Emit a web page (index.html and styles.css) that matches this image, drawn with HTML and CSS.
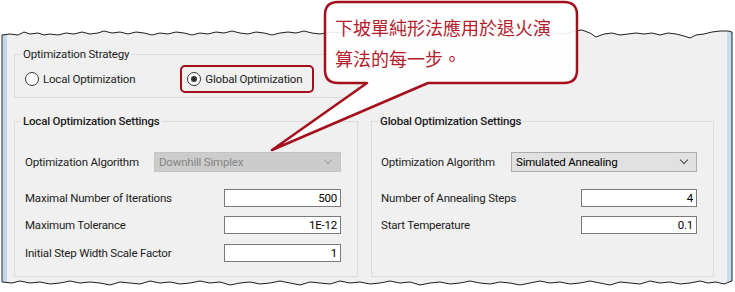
FILE: index.html
```html
<!DOCTYPE html>
<html lang="en">
<head>
  <meta charset="UTF-8" />
  <title>Optimization Settings</title>
  <link rel="stylesheet" href="styles.css">
</head>
<body>
  <div class="page">
    <!-- torn screenshot frame -->
    <svg class="frame" width="735" height="292" viewBox="0 0 735 292">
      <path class="paper" d="M2 35 L10 34 L18 35 L24 32 L30 34 L38 33 L44 35 L50 34 L58 35 L66 33 L74 34 L82 32 L90 34 L98 33 L104 31 L112 33 L120 32 L128 34 L136 32 L144 33 L152 35 L160 33 L168 34 L176 32 L184 33 L192 35 L200 33 L208 34 L216 32 L224 33 L232 31 L240 33 L248 34 L256 32 L264 33 L272 35 L280 33 L288 32 L296 33 L304 31 L312 33 L320 34 L330 32 L340 33 L350 31 L360 33 L372 34 L384 32 L396 33 L408 31 L420 34 L432 33 L444 32 L456 34 L468 33 L480 31 L492 33 L504 34 L516 32 L528 33 L540 31 L552 33 L564 34 L574 31 L582 30 L590 33 L596 37 L604 34 L612 33 L620 35 L628 34 L636 33 L644 34 L652 33 L660 35 L668 33 L676 34 L684 36 L690 38 L696 35 L704 34 L712 32 L720 31 L728 31 L732 32 L732 281 L724 284 L716 282 L708 283 L700 281 L690 283 L680 284 L670 282 L660 283 L650 281 L640 284 L630 283 L620 282 L610 285 L600 283 L590 281 L580 283 L570 284 L560 282 L550 283 L540 281 L530 283 L520 285 L510 283 L500 282 L490 284 L480 283 L470 281 L460 283 L450 284 L440 282 L430 283 L420 285 L410 282 L400 283 L390 281 L380 283 L370 284 L360 282 L350 283 L340 281 L330 284 L320 283 L310 282 L300 285 L290 283 L280 281 L270 283 L260 284 L250 282 L240 283 L230 285 L220 282 L210 283 L200 281 L190 283 L180 284 L170 282 L160 283 L150 281 L140 284 L130 283 L120 282 L110 285 L100 283 L90 282 L80 283 L70 281 L60 283 L50 284 L40 282 L30 283 L20 281 L12 283 L2 282 Z"/>
      <rect class="edge" x="3" y="35" width="4" height="247"/>
      <rect class="edge edge-right" x="727" y="32" width="5" height="250"/>
      <path class="tear" d="M2 35 L10 34 L18 35 L24 32 L30 34 L38 33 L44 35 L50 34 L58 35 L66 33 L74 34 L82 32 L90 34 L98 33 L104 31 L112 33 L120 32 L128 34 L136 32 L144 33 L152 35 L160 33 L168 34 L176 32 L184 33 L192 35 L200 33 L208 34 L216 32 L224 33 L232 31 L240 33 L248 34 L256 32 L264 33 L272 35 L280 33 L288 32 L296 33 L304 31 L312 33 L320 34 L330 32 L340 33 L350 31 L360 33 L372 34 L384 32 L396 33 L408 31 L420 34 L432 33 L444 32 L456 34 L468 33 L480 31 L492 33 L504 34 L516 32 L528 33 L540 31 L552 33 L564 34 L574 31 L582 30 L590 33 L596 37 L604 34 L612 33 L620 35 L628 34 L636 33 L644 34 L652 33 L660 35 L668 33 L676 34 L684 36 L690 38 L696 35 L704 34 L712 32 L720 31 L728 31 L732 32 L732 281 L724 284 L716 282 L708 283 L700 281 L690 283 L680 284 L670 282 L660 283 L650 281 L640 284 L630 283 L620 282 L610 285 L600 283 L590 281 L580 283 L570 284 L560 282 L550 283 L540 281 L530 283 L520 285 L510 283 L500 282 L490 284 L480 283 L470 281 L460 283 L450 284 L440 282 L430 283 L420 285 L410 282 L400 283 L390 281 L380 283 L370 284 L360 282 L350 283 L340 281 L330 284 L320 283 L310 282 L300 285 L290 283 L280 281 L270 283 L260 284 L250 282 L240 283 L230 285 L220 282 L210 283 L200 281 L190 283 L180 284 L170 282 L160 283 L150 281 L140 284 L130 283 L120 282 L110 285 L100 283 L90 282 L80 283 L70 281 L60 283 L50 284 L40 282 L30 283 L20 281 L12 283 L2 282 Z"/>
    </svg>

    <div class="window">
      <fieldset class="group strategy">
        <legend>Optimization Strategy</legend>
        <div class="radios">
          <label class="radio"><span class="dot"></span>Local Optimization</label>
          <label class="radio picked"><span class="dot on"></span>Global Optimization</label>
        </div>
      </fieldset>

      <div class="settings">
        <fieldset class="group local">
          <legend class="bold">Local Optimization Settings</legend>
          <div class="inner">
            <div class="row first">
              <span class="lbl">Optimization Algorithm</span>
              <div class="combo off">Downhill Simplex<span class="chev"></span></div>
            </div>
            <div class="row wide-gap">
              <span class="lbl">Maximal Number of Iterations</span>
              <div class="field">500</div>
            </div>
            <div class="row">
              <span class="lbl">Maximum Tolerance</span>
              <div class="field">1E-12</div>
            </div>
            <div class="row last">
              <span class="lbl">Initial Step Width Scale Factor</span>
              <div class="field">1</div>
            </div>
          </div>
        </fieldset>

        <fieldset class="group global">
          <legend class="bold">Global Optimization Settings</legend>
          <div class="inner">
            <div class="row first">
              <span class="lbl">Optimization Algorithm</span>
              <div class="combo">Simulated Annealing<span class="chev"></span></div>
            </div>
            <div class="row wide-gap">
              <span class="lbl">Number of Annealing Steps</span>
              <div class="field">4</div>
            </div>
            <div class="row">
              <span class="lbl">Start Temperature</span>
              <div class="field">0.1</div>
            </div>
          </div>
        </fieldset>
      </div>
    </div>

    <!-- callout -->
    <svg class="bubble" width="735" height="292" viewBox="0 0 735 292">
      <path d="M338 2 H564 Q577 2 577 15 V70 Q577 83 564 83 H428 L272 150 L367 83 H338 Q325 83 325 70 V15 Q325 2 338 2 Z"/>
    </svg>
    <div class="bubble-text">下坡單純形法應用於退火演<br>算法的每一步。</div>
  </div>
</body>
</html>
```

FILE: styles.css
```css
body {
  margin: 0;
  background: #fff;
  font-family: Roboto, "Liberation Sans", sans-serif;
  font-size: 11.5px;
  letter-spacing: -0.2px;
  color: #1c1c1c;
}

.page {
  position: relative;
  width: 735px;
  height: 292px;
  overflow: hidden;
}

.frame {
  position: absolute;
  left: 0;
  top: 0;
}

.paper {
  fill: #f0f0f0;
}

.edge {
  fill: #c3d7ec;
}

.edge-right {
  fill: #c8dcef;
}

.tear {
  fill: none;
  stroke: #1e1e1e;
  stroke-width: 1;
}

.window {
  position: relative;
  padding: 46px 0 0 14px;
}

.group {
  margin: 0;
  padding: 0;
  min-width: 0;
  border: 1px solid #dcdcdc;
  box-sizing: border-box;
}

.group legend {
  margin-left: 6px;
  padding: 0 2px;
  line-height: 16px;
}

.bold {
  font-weight: 500;
}

.strategy {
  width: 344px;
}

.radios {
  display: flex;
  align-items: center;
  height: 28px;
  padding: 3px 0 4px 10px;
}

.radio {
  display: flex;
  align-items: center;
  gap: 4px;
}

.radio.picked {
  margin-left: 45px;
  height: 24px;
  padding: 0 10px 0 5px;
  border: 2px solid #a50f1c;
  border-radius: 5px;
}

.dot {
  width: 12px;
  height: 12px;
  border: 1px solid #333;
  border-radius: 50%;
  background: #fff;
  display: flex;
  align-items: center;
  justify-content: center;
}

.dot.on::after {
  content: "";
  width: 6px;
  height: 6px;
  border-radius: 50%;
  background: #333;
}

.settings {
  display: flex;
  gap: 13px;
  margin-top: 15px;
}

.local {
  width: 344px;
}

.global {
  width: 343px;
}

.inner {
  padding: 23px 16px 14px 10px;
}

.global .inner {
  padding-left: 9px;
}

.row {
  display: flex;
  align-items: center;
  justify-content: space-between;
  margin-top: 9px;
  white-space: nowrap;
}

.row.first {
  margin-top: 0;
}

.row.wide-gap {
  margin-top: 17px;
}

.row.last {
  margin-top: 10px;
}

.combo {
  position: relative;
  height: 20px;
  line-height: 18px;
  box-sizing: border-box;
  padding-left: 4px;
  background: #e1e1e1;
  border: 1px solid #adadad;
  color: #000;
}

.local .combo {
  width: 187px;
}

.global .combo {
  width: 186px;
}

.combo.off {
  background: #cccccc;
  border-color: #c4c4c4;
  color: #858585;
}

.chev {
  position: absolute;
  right: 9px;
  top: 4px;
  width: 5px;
  height: 5px;
  border-right: 1px solid #444;
  border-bottom: 1px solid #444;
  transform: rotate(45deg);
}

.combo.off .chev {
  border-color: #a3a3a3;
}

.field {
  width: 117px;
  height: 18px;
  line-height: 16px;
  box-sizing: border-box;
  border: 1px solid #7a7a7a;
  background: #fff;
  text-align: right;
  padding-right: 3px;
  color: #000;
}

.global .field {
  width: 116px;
}

.bubble {
  position: absolute;
  left: 0;
  top: 0;
}

.bubble path {
  fill: rgba(255, 255, 255, 0.9);
  stroke: #a50f1c;
  stroke-width: 2.5;
  stroke-linejoin: round;
}

.bubble-text {
  position: absolute;
  left: 335px;
  top: 12px;
  font-family: "Noto Sans CJK TC", "Noto Sans CJK SC", sans-serif;
  font-size: 18px;
  line-height: 31px;
  letter-spacing: 0;
  color: #b3202c;
  white-space: nowrap;
}
```
